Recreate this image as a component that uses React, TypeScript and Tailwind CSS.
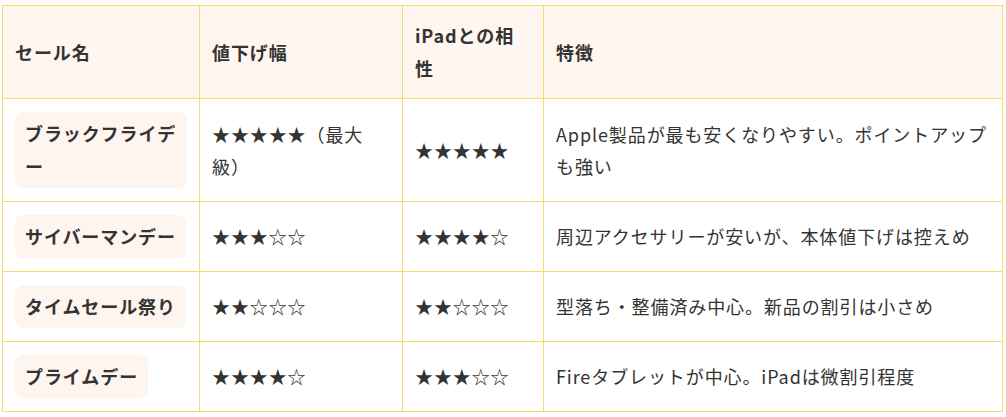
const rows = [
  {
    name: 'ブラックフライデー',
    discount: '★★★★★（最大級）',
    ipad: '★★★★★',
    note: 'Apple製品が最も安くなりやすい。ポイントアップも強い',
  },
  {
    name: 'サイバーマンデー',
    discount: '★★★☆☆',
    ipad: '★★★★☆',
    note: '周辺アクセサリーが安いが、本体値下げは控えめ',
  },
  {
    name: 'タイムセール祭り',
    discount: '★★☆☆☆',
    ipad: '★★☆☆☆',
    note: '型落ち・整備済み中心。新品の割引は小さめ',
  },
  {
    name: 'プライムデー',
    discount: '★★★★☆',
    ipad: '★★★☆☆',
    note: 'Fireタブレットが中心。iPadは微割引程度',
  },
];

const th = 'border border-[#f6dc6c] bg-[#fff6f0] px-3 py-[13px] text-left align-middle font-bold leading-[33px]';
const td = 'border border-[#f6dc6c] px-3 py-[13px] align-middle leading-[32.4px]';

export default function App() {
  return (
    <div className="min-h-[417px] bg-white pl-[2px] pt-[5px] font-['Noto_Sans_CJK_JP',sans-serif] text-[18px] tracking-[0.05em] text-[#333]">
      <table className="w-[1000px] table-fixed border-collapse">
        <colgroup>
          <col className="w-[197px]" />
          <col className="w-[203px]" />
          <col className="w-[141px]" />
          <col className="w-[459px]" />
        </colgroup>
        <thead>
          <tr>
            <th className={th}>セール名</th>
            <th className={th}>値下げ幅</th>
            <th className={th}>
              iPadとの相
              <br />
              性
            </th>
            <th className={th}>特徴</th>
          </tr>
        </thead>
        <tbody>
          {rows.map((row) => (
            <tr key={row.name}>
              <td className={td}>
                <span className="inline-block rounded-lg bg-[#fff5ef] px-[10px] py-[5px] font-bold leading-[33px]">
                  {row.name}
                </span>
              </td>
              <td className={td}>{row.discount}</td>
              <td className={td}>{row.ipad}</td>
              <td className={td}>{row.note}</td>
            </tr>
          ))}
        </tbody>
      </table>
    </div>
  );
}
